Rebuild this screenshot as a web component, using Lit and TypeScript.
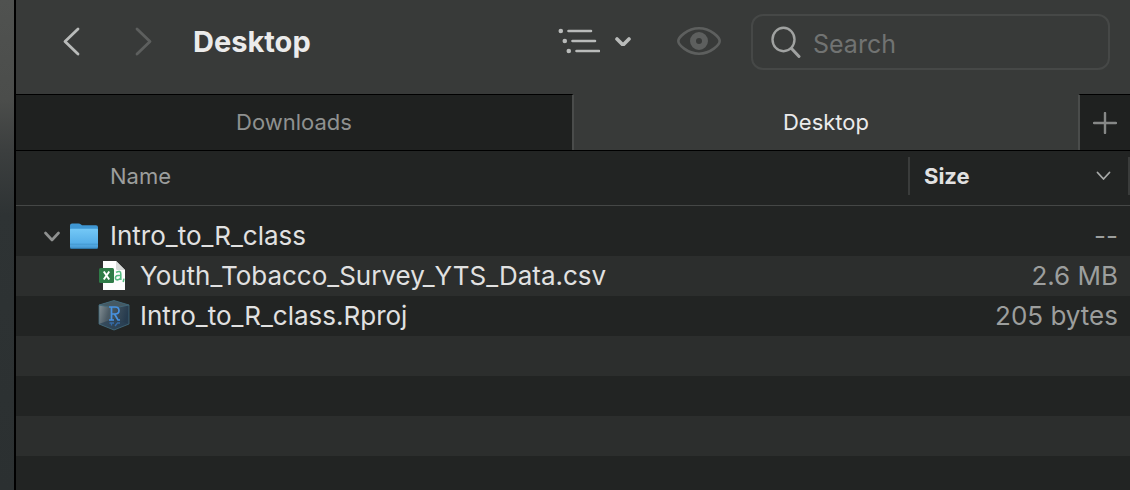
import { LitElement, html, css, svg, nothing } from "lit";
import { customElement, state } from "lit/decorators.js";

interface Entry {
  name: string;
  size: string;
  kind: "folder" | "csv" | "rproj";
}

const ENTRIES: Entry[] = [
  { name: "Intro_to_R_class", size: "--", kind: "folder" },
  { name: "Youth_Tobacco_Survey_YTS_Data.csv", size: "2.6 MB", kind: "csv" },
  { name: "Intro_to_R_class.Rproj", size: "205 bytes", kind: "rproj" },
];

const folderIcon = html`<svg class="icon" width="32" height="32" viewBox="0 0 32 32" aria-hidden="true">
  <defs>
    <linearGradient id="front" x1="0" y1="0" x2="0" y2="1">
      <stop offset="0" stop-color="#74c8f6" />
      <stop offset="0.75" stop-color="#55aee8" />
      <stop offset="1" stop-color="#4496d0" />
    </linearGradient>
  </defs>
  <path d="M2 5.5Q2 3.5 4 3.5H10.5Q12 3.5 13 4.5L14 5.3H28Q30 5.3 30 7.3V26H2Z" fill="#3f97d3" />
  <path d="M2 9.2Q2 8.7 2.8 8.7H29.2Q30 8.7 30 9.2V27Q30 28.6 28.4 28.6H3.6Q2 28.6 2 27Z" fill="url(#front)" />
  <path d="M2 24.2H30" stroke="#4598d0" stroke-width="1" />
  <path d="M2.5 28.4H29.5" stroke="#2f79ad" stroke-width="1" />
</svg>`;

const csvIcon = html`<svg class="icon" width="32" height="32" viewBox="0 0 32 32" aria-hidden="true">
  <path d="M5 1H18L27 10V30H5Z" fill="#fdfdfd" />
  <path d="M18 1L27 10H19.5Q18 10 18 8.5Z" fill="#d9dbda" />
  <rect x="1" y="8" width="15" height="15" rx="1.5" fill="#2f7b47" />
  <path d="M5.8 11.5L11.2 19.5M11.2 11.5L5.8 19.5" stroke="#fff" stroke-width="2" />
  <path d="M18 12.4Q22.8 10 22.8 14V20M22.8 15.2Q17.4 15 17.4 18Q17.6 20.2 20 19.8Q22 19.4 22.8 17.6M26 18.6L25.2 22" fill="none" stroke="#55bd82" stroke-width="1.6" />
</svg>`;

const rprojIcon = html`<svg class="icon" width="32" height="32" viewBox="0 0 32 32" aria-hidden="true">
  <defs>
    <linearGradient id="side" x1="0" y1="0" x2="1" y2="0.3">
      <stop offset="0" stop-color="#8b969b" />
      <stop offset="0.4" stop-color="#4c5b65" />
      <stop offset="1" stop-color="#263b4e" />
    </linearGradient>
  </defs>
  <path d="M16 0.500L31 5V24L16 30L1 24V5Z" fill="url(#side)" />
  <path d="M1 5L16 0.500L31 5L16 8Z" fill="#455963" />
  <path d="M1 24L16 18.500L31 24L16 30Z" fill="#2b4256" opacity="0.7" />
  <path d="M16 0.500L31 5V24L16 30L1 24V5ZM1 5L16 8L31 5" fill="none" stroke="#436c7d" stroke-width="0.8" />
  <path d="M11 7H17Q21 7 21 10.5Q21 14 17 14H13.5M13.5 7V20M11 20H16M16.5 14L20 20H22" fill="none" stroke="#4792e2" stroke-width="1.7" />
  <path d="M11.5 23H16M19 23H22M13.5 23V25.5M19.5 23L17 26" fill="none" stroke="#346ba8" stroke-width="1.3" />
</svg>`;

const ICONS = { folder: folderIcon, csv: csvIcon, rproj: rprojIcon };

@customElement("app-root")
export class AppRoot extends LitElement {
  @state() private tab = "Desktop";
  @state() private open = true;

  static styles = css`
    :host {
      display: flex;
      min-height: 100vh;
      background: #222423;
      font-family: Inter, "Liberation Sans", sans-serif;
      color: #e1e1e1;
    }
    button {
      display: inline-flex;
      align-items: center;
      justify-content: center;
      margin: 0;
      padding: 0;
      border: 0;
      background: none;
      color: inherit;
      font: inherit;
    }
    svg {
      display: block;
      flex: none;
    }
    .backdrop {
      flex: none;
      width: 14px;
      border-right: 2px solid #000;
      background: linear-gradient(#505250 0, #4b4d4b 100px, #3c3f3f 150px, #2e3334 215px, #2b3031 100%);
    }
    .window {
      flex: 1;
      min-width: 0;
      display: flex;
      flex-direction: column;
    }
    .toolbar {
      display: flex;
      align-items: center;
      padding: 14px 20px 24px 39px;
      background: #383a39;
    }
    .nav {
      width: 32px;
      height: 56px;
      padding-bottom: 2px;
      color: #b9bbba;
    }
    .nav.forward {
      margin-left: 40px;
      color: #5d5f5e;
    }
    .title {
      flex: 1;
      margin: 0 0 0 34px;
      font-size: 29px;
      line-height: 56px;
      font-weight: 700;
      color: #ebebeb;
    }
    .view {
      gap: 15px;
      height: 56px;
      padding-bottom: 2px;
      color: #b9bbba;
    }
    .eye {
      margin: 0 30px 0 46px;
      height: 56px;
      padding-bottom: 2px;
      color: #5d5f5e;
    }
    .search {
      box-sizing: border-box;
      display: flex;
      align-items: center;
      gap: 12px;
      width: 359px;
      height: 56px;
      padding: 0 18px;
      border: 2px solid #464847;
      border-radius: 12px;
      color: #a0a2a1;
    }
    .search input {
      flex: 1;
      min-width: 0;
      padding: 4px 0 0;
      border: 0;
      outline: 0;
      background: none;
      color: #e1e1e1;
      font: 25px/32px Inter, sans-serif;
    }
    .search input::placeholder {
      color: #717372;
      opacity: 1;
    }
    .tabs {
      display: flex;
      height: 55px;
      padding-top: 1px;
      border-bottom: 1px solid #000;
      background: #383a39;
    }
    .tab {
      flex: 504;
      padding-bottom: 2px;
      font-size: 22px;
      color: #ebebeb;
    }
    .tab.idle {
      flex: 556;
      margin-top: -1px;
      border-top: 1px solid #000;
      background: #1f2120;
      color: #8f9190;
    }
    .tab.first {
      border-right: 2px solid #4a4c4b;
    }
    .add {
      width: 52px;
      margin-top: -1px;
      border-top: 1px solid #000;
      border-left: 2px solid #4a4c4b;
      background: #1f2120;
      color: #868887;
    }
    table {
      width: 100%;
      table-layout: fixed;
      border-collapse: separate;
      border-spacing: 0;
    }
    .size-col {
      width: 222px;
    }
    th {
      height: 50px;
      padding: 0 0 4px;
      border-bottom: 1px solid #454746;
      text-align: left;
      font-size: 22px;
      line-height: 38px;
      font-weight: 400;
      color: #9c9e9d;
    }
    .name-head {
      padding-left: 94px;
    }
    .sort {
      width: 100%;
      height: 38px;
      justify-content: space-between;
      box-sizing: border-box;
      padding: 0 17px 0 14px;
      border-left: 2px solid #3a3c3b;
      border-right: 2px solid #3a3c3b;
      font-weight: 700;
      color: #e1e1e1;
    }
    .sort svg {
      color: #a8aaa9;
    }
    .files {
      background: #222423;
    }
    .files::before {
      content: "";
      display: block;
      height: 10px;
    }
    td {
      height: 40px;
      padding: 0;
      font-size: 26px;
      line-height: 40px;
      white-space: nowrap;
    }
    .row:nth-child(even) {
      background: #2c2e2d;
    }
    .cell {
      display: flex;
      align-items: center;
      height: 40px;
      padding-left: 82px;
    }
    .cell.top {
      padding-left: 28px;
    }
    .toggle {
      width: 16px;
      height: 40px;
      margin-right: 8px;
      color: #8f9190;
    }
    .toggle.closed {
      transform: rotate(-90deg);
    }
    .label {
      margin-left: 10px;
      overflow: hidden;
      text-overflow: ellipsis;
    }
    .size {
      padding-right: 12px;
      text-align: right;
      color: #9c9e9d;
    }
    .filler {
      flex: 1;
      background: repeating-linear-gradient(#2c2e2d 0 40px, #222423 40px 80px);
    }
  `;

  private chevron(d: string, w: number, h: number, stroke: number) {
    return html`<svg width=${w} height=${h} viewBox="0 0 ${w} ${h}" fill="none" stroke="currentColor"
      stroke-width=${stroke} stroke-linecap="round" stroke-linejoin="round" aria-hidden="true">
      ${svg`<path d=${d} />`}
    </svg>`;
  }

  private renderTab(name: string, first: boolean) {
    const idle = this.tab !== name;
    return html`<button role="tab" aria-selected=${idle ? "false" : "true"}
      class="tab ${idle ? "idle" : ""} ${first ? "first" : ""}"
      @click=${() => (this.tab = name)}>${name}</button>`;
  }

  private renderRow(entry: Entry) {
    const top = entry.kind === "folder";
    return html`<tr class="row">
      <td>
        <div class="cell ${top ? "top" : ""}">
          ${top
            ? html`<button class="toggle ${this.open ? "" : "closed"}" aria-label="Toggle folder"
                aria-expanded=${this.open ? "true" : "false"} @click=${() => (this.open = !this.open)}>
                ${this.chevron("M1.5 2L8 9L14.5 2", 16, 11, 2.6)}
              </button>`
            : nothing}
          ${ICONS[entry.kind]}
          <span class="label">${entry.name}</span>
        </div>
      </td>
      <td class="size">${entry.size}</td>
    </tr>`;
  }

  render() {
    const rows = this.open ? ENTRIES : ENTRIES.slice(0, 1);
    return html`
      <div class="backdrop"></div>
      <main class="window">
        <header class="toolbar">
          <button class="nav" aria-label="Back">${this.chevron("M15 2L2 14.5L15 27", 17, 29, 2.8)}</button>
          <button class="nav forward" aria-label="Forward" disabled>
            ${this.chevron("M2 2L15 14.5L2 27", 17, 29, 2.8)}
          </button>
          <h1 class="title">Desktop</h1>
          <button class="view" aria-label="View as list">
            <svg width="42" height="26" viewBox="0 0 42 26" fill="none" stroke="currentColor" stroke-width="2.6" stroke-linecap="round" aria-hidden="true">
              <path d="M10.500 3H33M14.500 13H37M18.500 23H41" />
              <g fill="currentColor" stroke="none">
                <circle cx="2.8" cy="3" r="2.3" /><circle cx="6.8" cy="13" r="2.3" /><circle cx="10.8" cy="23" r="2.3" />
              </g>
            </svg>
            ${this.chevron("M2 3L8 9L14 3", 16, 10, 3.6)}
          </button>
          <button class="eye" aria-label="Quick Look" disabled>
            <svg width="44" height="28" viewBox="0 0 44 28" fill="none" stroke="currentColor" aria-hidden="true">
              <path d="M1.3 14C1.3 10.5 10 1.3 22 1.3S42.7 10.5 42.7 14S34 26.7 22 26.7S1.3 17.5 1.3 14Z" stroke-width="2.6" />
              <circle cx="22" cy="14" r="6" stroke-width="6" />
            </svg>
          </button>
          <label class="search">
            <svg width="30" height="32" viewBox="0 0 30 32" fill="none" stroke="currentColor" stroke-linecap="round" aria-hidden="true">
              <ellipse cx="12.5" cy="13.5" rx="11" ry="11.7" stroke-width="2.4" />
              <path d="M20.5 22.5L28 30.5" stroke-width="3" />
            </svg>
            <input type="text" placeholder="Search" aria-label="Search" />
          </label>
        </header>
        <nav class="tabs" role="tablist">
          ${this.renderTab("Downloads", true)} ${this.renderTab("Desktop", false)}
          <button class="add" aria-label="New tab">
            <svg width="24" height="22" viewBox="0 0 24 22" stroke="currentColor" stroke-width="2.4" aria-hidden="true">
              <path d="M1 11H23M12 1V21" stroke-linecap="round" />
            </svg>
          </button>
        </nav>
        <table>
          <colgroup><col /><col class="size-col" /></colgroup>
          <thead>
            <tr>
              <th class="name-head" scope="col">Name</th>
              <th scope="col">
                <button class="sort">Size ${this.chevron("M1.5 1.5L7.5 8L13.5 1.5", 15, 10, 1.8)}</button>
              </th>
            </tr>
          </thead>
          <tbody class="files">
            ${rows.map((entry) => this.renderRow(entry))}
          </tbody>
        </table>
        <div class="filler"></div>
      </main>
    `;
  }
}
